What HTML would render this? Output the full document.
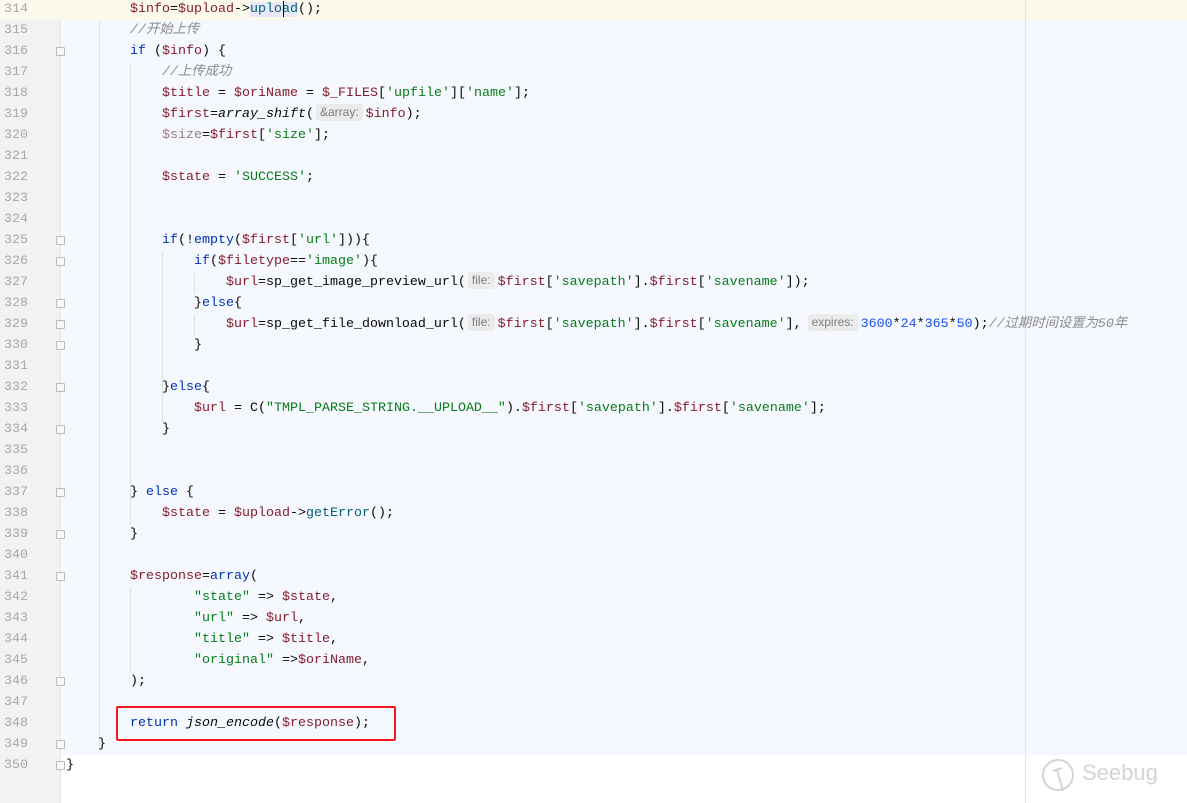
<!DOCTYPE html>
<html><head><meta charset="utf-8"><style>
body{margin:0;width:1187px;height:803px;overflow:hidden;background:#fff;position:relative;font-family:"Liberation Mono","Noto Sans CJK SC",monospace;}
#gut{position:absolute;left:0;top:0;width:60px;height:803px;background:#f2f2f2;border-right:1px solid #e3e3e3;}
#hl{position:absolute;left:0;top:-1px;width:1187px;height:21px;background:#fcfaed;}
#blue{position:absolute;left:62px;top:20px;width:1125px;height:735px;background:#f5f8fe;}
#vl{position:absolute;left:1025px;top:0;width:1px;height:803px;background:#e6e6e6;}
.ln{position:absolute;left:4px;width:40px;color:#a8a8a8;font-size:13.33px;line-height:21px;}
pre{position:absolute;left:66px;top:-1px;margin:0;font-family:inherit;font-size:13.33px;line-height:21px;color:#080808;}
.v{color:#871c2c}.k{color:#0033b3}.s{color:#067d17}.c{color:#8c8c8c;font-style:italic}.n{color:#1750eb}.m{color:#00627a}.f{font-style:italic}
.h{display:inline-block;background:#ebebeb;color:#7d7d7d;font:12px "Liberation Sans",sans-serif;line-height:17px;padding:0 4px;border-radius:3px;margin:0 3px 0 2px;vertical-align:1px}
.g{position:absolute;width:1px;background:#e0e0e0}
.fold{position:absolute;left:56px;width:7px;height:7px;border:1px solid #bbb;background:#f8f8f8;border-radius:1px;margin-top:2px}
#box{position:absolute;left:116px;top:706px;width:276px;height:31px;border:2px solid #f21b1b;border-radius:2px}
</style></head><body>
<div id="gut"></div>
<div id="hl"></div>
<div id="blue"></div>
<div id="vl"></div>
<div class="g" style="left:130px;top:63px;height:462px"></div>
<div class="g" style="left:162px;top:252px;height:170px"></div>
<div class="g" style="left:194px;top:273px;height:21px"></div>
<div class="g" style="left:194px;top:315px;height:21px"></div>
<div class="g" style="left:162px;top:399px;height:21px"></div>
<div class="g" style="left:130px;top:504px;height:21px"></div>
<div class="g" style="left:130px;top:588px;height:84px"></div>
<div class="g" style="left:99px;top:21px;height:724px"></div>
<div class="fold" style="top:45px"></div><div class="fold" style="top:234px"></div><div class="fold" style="top:255px"></div><div class="fold" style="top:297px"></div><div class="fold" style="top:318px"></div><div class="fold" style="top:339px"></div><div class="fold" style="top:381px"></div><div class="fold" style="top:423px"></div><div class="fold" style="top:486px"></div><div class="fold" style="top:528px"></div><div class="fold" style="top:570px"></div><div class="fold" style="top:675px"></div><div class="fold" style="top:738px"></div><div class="fold" style="top:759px"></div>
<div class="ln" style="top:-1px">314<br>315<br>316<br>317<br>318<br>319<br>320<br>321<br>322<br>323<br>324<br>325<br>326<br>327<br>328<br>329<br>330<br>331<br>332<br>333<br>334<br>335<br>336<br>337<br>338<br>339<br>340<br>341<br>342<br>343<br>344<br>345<br>346<br>347<br>348<br>349<br>350</div>
<pre>        <span class="v">$info</span>=<span class="v">$upload</span>-&gt;<span class="m" style="background:#e8e8f8">upload</span>();
        <span class="c">//开始上传</span>
        <span class="k">if</span> (<span class="v">$info</span>) {
            <span class="c">//上传成功</span>
            <span class="v">$title</span> = <span class="v">$oriName</span> = <span class="v">$_FILES</span>[<span class="s">'upfile'</span>][<span class="s">'name'</span>];
            <span class="v">$first</span>=<span class="f">array_shift</span>(<span class="h">&amp;array:</span><span class="v">$info</span>);
            <span class="v" style="color:#9a7b86">$size</span>=<span class="v">$first</span>[<span class="s">'size'</span>];

            <span class="v">$state</span> = <span class="s">'SUCCESS'</span>;


            <span class="k">if</span>(!<span class="k">empty</span>(<span class="v">$first</span>[<span class="s">'url'</span>])){
                <span class="k">if</span>(<span class="v">$filetype</span>==<span class="s">'image'</span>){
                    <span class="v">$url</span>=sp_get_image_preview_url(<span class="h">file:</span><span class="v">$first</span>[<span class="s">'savepath'</span>].<span class="v">$first</span>[<span class="s">'savename'</span>]);
                }<span class="k">else</span>{
                    <span class="v">$url</span>=sp_get_file_download_url(<span class="h">file:</span><span class="v">$first</span>[<span class="s">'savepath'</span>].<span class="v">$first</span>[<span class="s">'savename'</span>],<span class="h" style="margin-left:6px">expires:</span><span class="n">3600</span>*<span class="n">24</span>*<span class="n">365</span>*<span class="n">50</span>);<span class="c">//过期时间设置为50年</span>
                }

            }<span class="k">else</span>{
                <span class="v">$url</span> = C(<span class="s">"TMPL_PARSE_STRING.__UPLOAD__"</span>).<span class="v">$first</span>[<span class="s">'savepath'</span>].<span class="v">$first</span>[<span class="s">'savename'</span>];
            }


        } <span class="k">else</span> {
            <span class="v">$state</span> = <span class="v">$upload</span>-&gt;<span class="m">getError</span>();
        }

        <span class="v">$response</span>=<span class="k">array</span>(
                <span class="s">"state"</span> =&gt; <span class="v">$state</span>,
                <span class="s">"url"</span> =&gt; <span class="v">$url</span>,
                <span class="s">"title"</span> =&gt; <span class="v">$title</span>,
                <span class="s">"original"</span> =&gt;<span class="v">$oriName</span>,
        );

        <span class="k">return</span> <span class="f">json_encode</span>(<span class="v">$response</span>);
    }
}</pre>
<div style="position:absolute;left:283px;top:1px;width:1px;height:16px;background:#000"></div>
<div id="box"></div>
<svg style="position:absolute;left:1040px;top:756px" width="40" height="42" viewBox="0 0 40 42"><circle cx="18" cy="19" r="15" fill="none" stroke="#d4d4d4" stroke-width="2"/><path d="M13 15 L22 12 M17 14 L23 35" stroke="#d4d4d4" stroke-width="2" fill="none"/></svg>
<div style="position:absolute;left:1082px;top:760px;font:22px 'Liberation Sans',sans-serif;color:#d4d4d4">Seebug</div>
</body></html>
